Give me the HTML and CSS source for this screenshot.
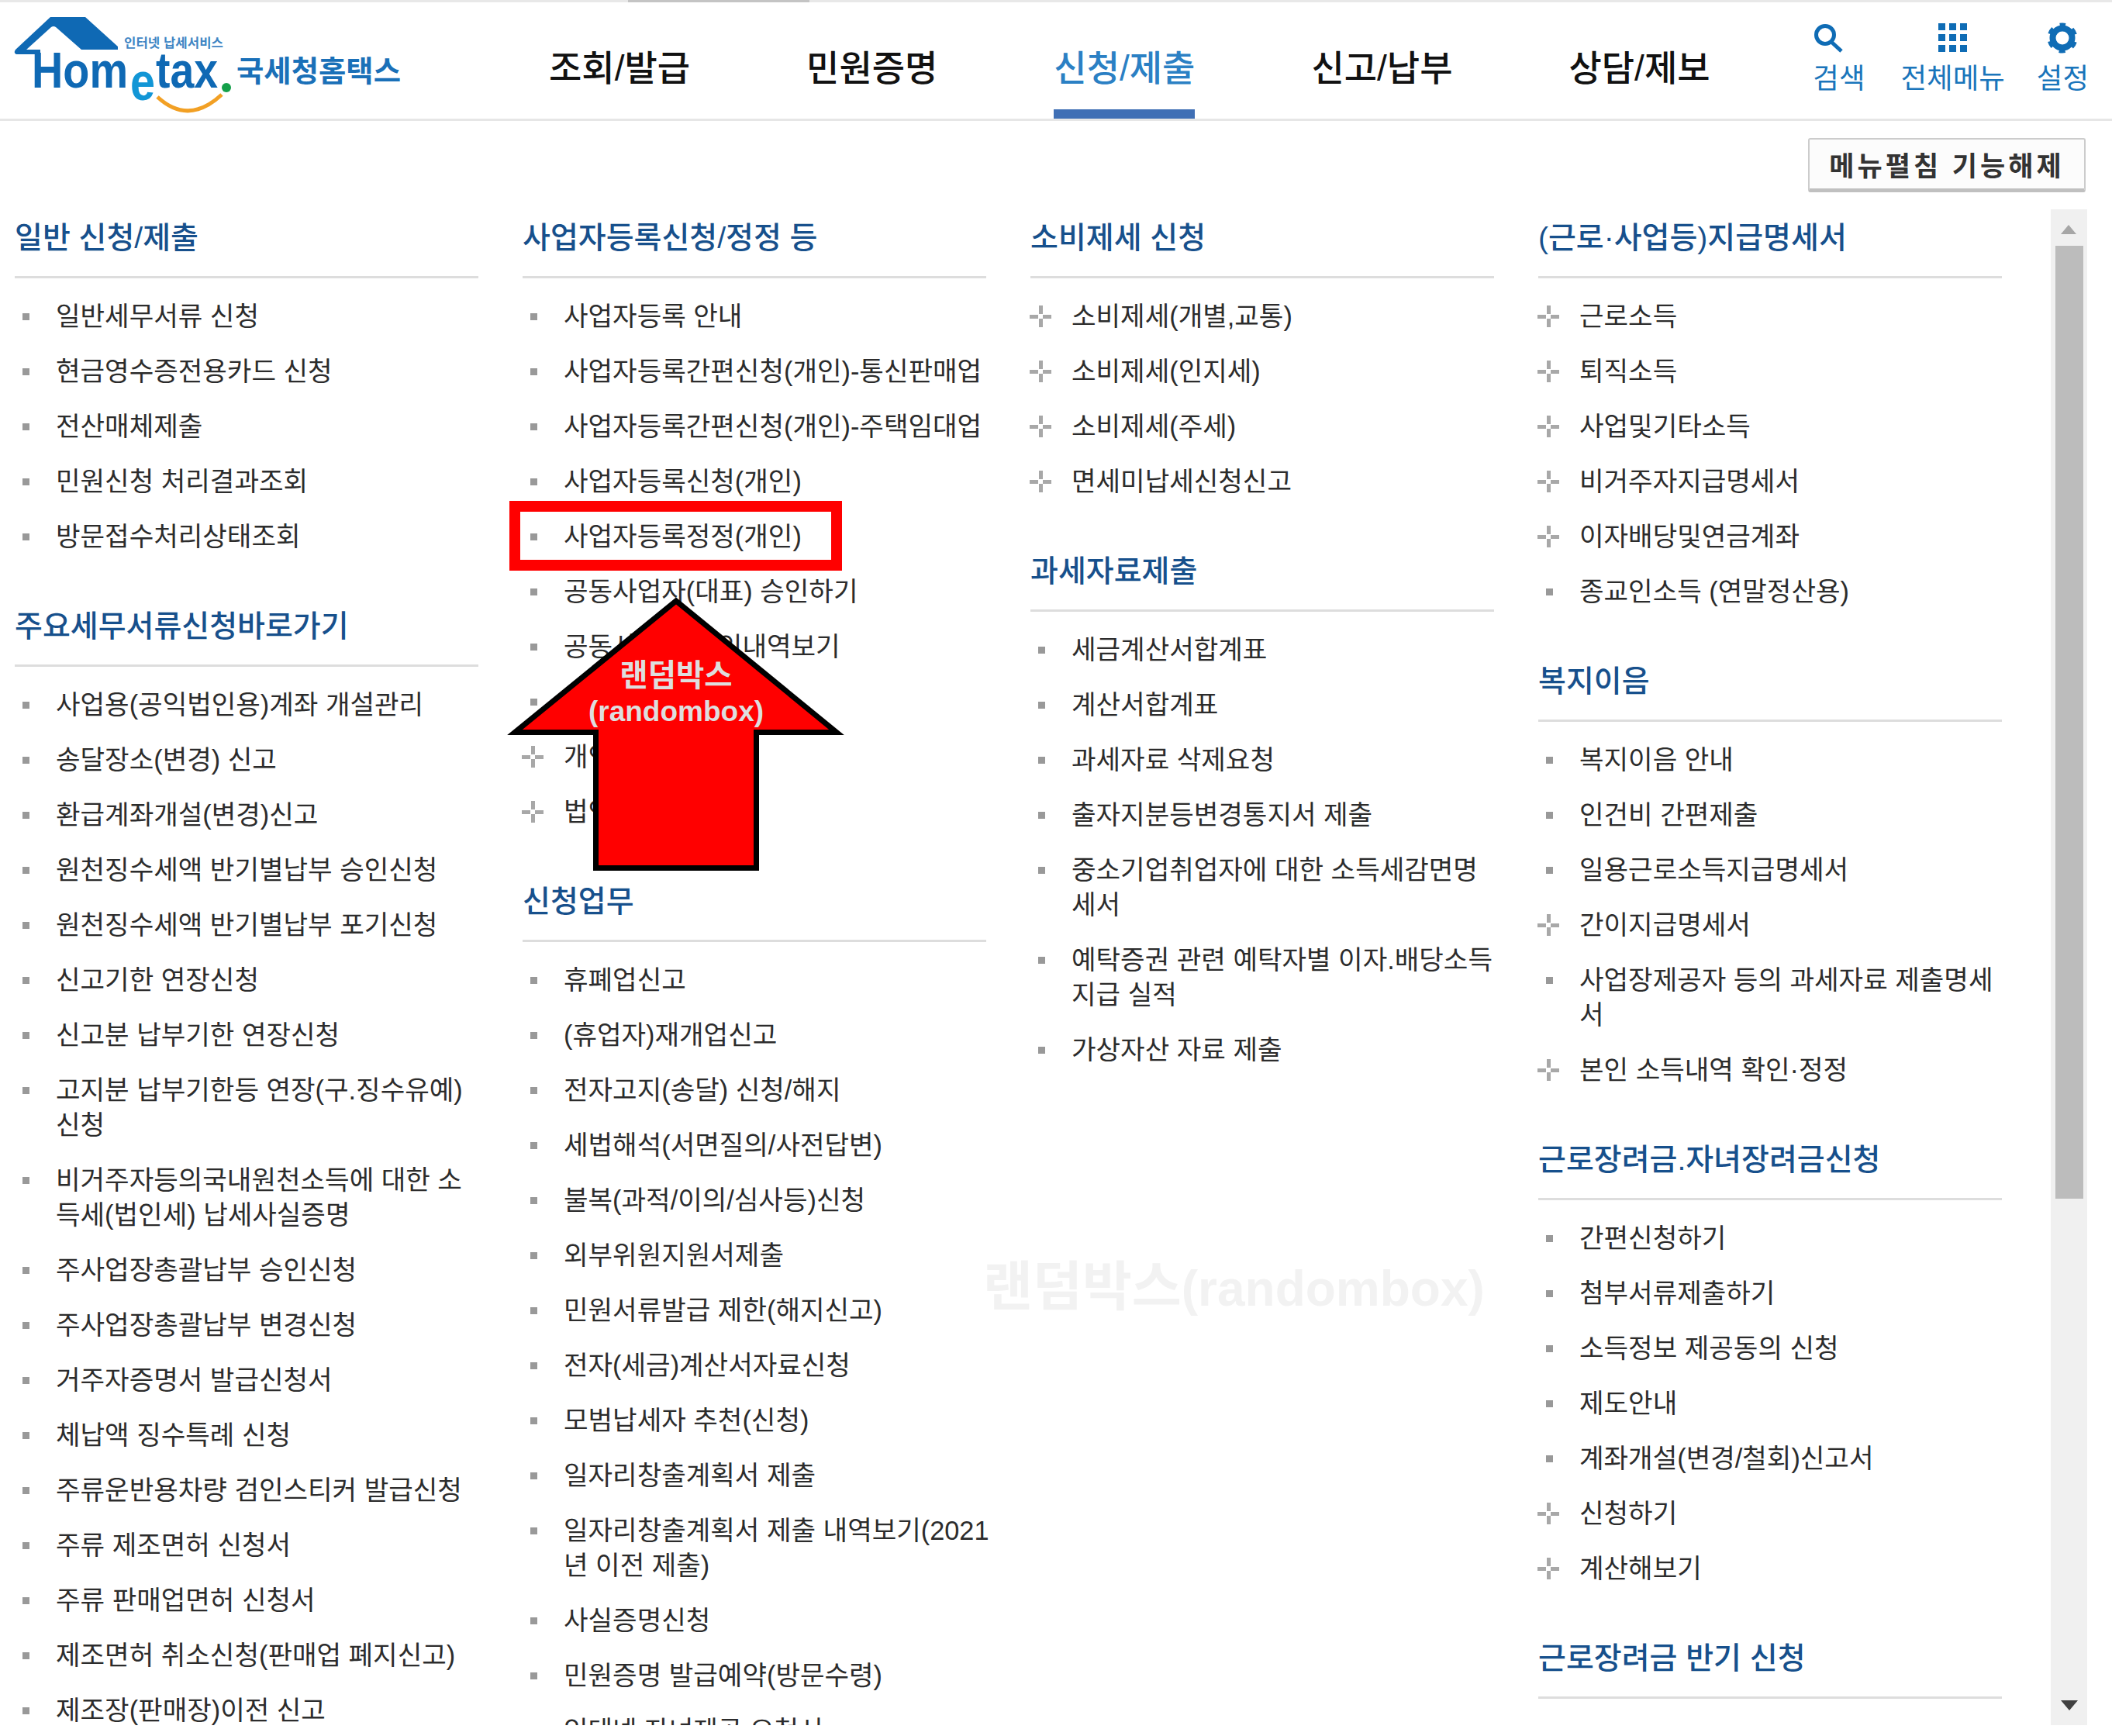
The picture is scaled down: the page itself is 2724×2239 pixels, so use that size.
FILE: index.html
```html
<!DOCTYPE html>
<html lang="ko">

<head>
    <meta charset="UTF-8">
    <title>Hometax 국세청홈택스</title>
    <link rel="stylesheet" href="styles.css">
</head>

<body>
    <div class="page">
        <div class="top-strip"><span class="strip-mark"></span></div>

        <header class="site-header">
            <svg class="logo" width="540" height="150" viewBox="0 3 540 150">
                <path class="logo-house" d="M65 22H110L152 60V64H105L72 35Q69 33 66 35L34 64H52V70H21Q17 68 20 64Z"/>
                <text class="logo-slogan" x="160" y="61" textLength="128" lengthAdjust="spacingAndGlyphs">인터넷 납세서비스</text>
                <text class="logo-word" x="41" y="113" textLength="124" lengthAdjust="spacingAndGlyphs">Hom</text>
                <text class="logo-e" x="168" y="129" textLength="32" lengthAdjust="spacingAndGlyphs">e</text>
                <text class="logo-word" x="201" y="113" textLength="80" lengthAdjust="spacingAndGlyphs">tax</text>
                <circle class="logo-dot" cx="292" cy="113" r="6"/>
                <path class="logo-smile" d="M203 125Q243 162 286 122"/>
                <text class="logo-name" x="305" y="105" textLength="212" lengthAdjust="spacingAndGlyphs">국세청홈택스</text>
            </svg>

            <nav class="main-nav">
                <a>조회/발급</a>
                <a>민원증명</a>
                <a class="active">신청/제출</a>
                <a>신고/납부</a>
                <a>상담/제보</a>
            </nav>

            <div class="tools">
                <a class="tool tool-search">
                    <svg width="66" height="40" viewBox="0 0 66 40">
                        <circle cx="15" cy="16" r="11.5" fill="none" stroke="#0f6cb5" stroke-width="5"/>
                        <path d="M23 25L36 37" stroke="#0f6cb5" stroke-width="5" fill="none"/>
                    </svg>
                    <span>검색</span>
                </a>
                <a class="tool">
                    <svg width="38" height="40" viewBox="0 0 38 40" fill="#0f6cb5">
                        <rect x="0" y="1" width="9" height="9"/><rect x="14" y="1" width="9" height="9"/><rect x="28" y="1" width="9" height="9"/>
                        <rect x="0" y="15" width="9" height="9"/><rect x="14" y="15" width="9" height="9"/><rect x="28" y="15" width="9" height="9"/>
                        <rect x="0" y="29" width="9" height="9"/><rect x="14" y="29" width="9" height="9"/><rect x="28" y="29" width="9" height="9"/>
                    </svg>
                    <span>전체메뉴</span>
                </a>
                <a class="tool">
                    <svg width="40" height="40" viewBox="0 0 40 40">
                        <circle cx="20" cy="20" r="12.500" fill="none" stroke="#0f6cb5" stroke-width="8"/>
                        <circle cx="20" cy="20" r="17" fill="none" stroke="#0f6cb5" stroke-width="5" stroke-dasharray="8 9.800" stroke-dashoffset="4" transform="rotate(-90 20 20)"/>
                    </svg>
                    <span>설정</span>
                </a>
            </div>
        </header>

        <div class="toolbar">
            <button class="fold-btn">메뉴펼침 기능해제</button>
        </div>

        <main class="menu">
            <div class="columns">
                <div class="column">
                    <section class="group">
                        <h2>일반 신청/제출</h2>
                        <ul>
                            <li>일반세무서류 신청</li>
                            <li>현금영수증전용카드 신청</li>
                            <li>전산매체제출</li>
                            <li>민원신청 처리결과조회</li>
                            <li>방문접수처리상태조회</li>
                        </ul>
                    </section>
                    <section class="group">
                        <h2>주요세무서류신청바로가기</h2>
                        <ul>
                            <li>사업용(공익법인용)계좌 개설관리</li>
                            <li>송달장소(변경) 신고</li>
                            <li>환급계좌개설(변경)신고</li>
                            <li>원천징수세액 반기별납부 승인신청</li>
                            <li>원천징수세액 반기별납부 포기신청</li>
                            <li>신고기한 연장신청</li>
                            <li>신고분 납부기한 연장신청</li>
                            <li><span>고지분 납부기한등 연장(구.징수유예)<br>신청</span></li>
                            <li><span>비거주자등의국내원천소득에 대한 소<br>득세(법인세) 납세사실증명</span></li>
                            <li>주사업장총괄납부 승인신청</li>
                            <li>주사업장총괄납부 변경신청</li>
                            <li>거주자증명서 발급신청서</li>
                            <li>체납액 징수특례 신청</li>
                            <li>주류운반용차량 검인스티커 발급신청</li>
                            <li>주류 제조면허 신청서</li>
                            <li>주류 판매업면허 신청서</li>
                            <li>제조면허 취소신청(판매업 폐지신고)</li>
                            <li>제조장(판매장)이전 신고</li>
                        </ul>
                    </section>
                </div>

                <div class="column">
                    <section class="group">
                        <h2>사업자등록신청/정정 등</h2>
                        <ul>
                            <li>사업자등록 안내</li>
                            <li>사업자등록간편신청(개인)-통신판매업</li>
                            <li>사업자등록간편신청(개인)-주택임대업</li>
                            <li>사업자등록신청(개인)</li>
                            <li>사업자등록정정(개인)</li>
                            <li>공동사업자(대표) 승인하기</li>
                            <li>공동사업자 승인내역보기</li>
                            <li>사업자등록증 재발급</li>
                            <li class="more">개인사업자</li>
                            <li class="more">법인사업자</li>
                        </ul>
                    </section>
                    <section class="group">
                        <h2>신청업무</h2>
                        <ul>
                            <li>휴폐업신고</li>
                            <li>(휴업자)재개업신고</li>
                            <li>전자고지(송달) 신청/해지</li>
                            <li>세법해석(서면질의/사전답변)</li>
                            <li>불복(과적/이의/심사등)신청</li>
                            <li>외부위원지원서제출</li>
                            <li>민원서류발급 제한(해지신고)</li>
                            <li>전자(세금)계산서자료신청</li>
                            <li>모범납세자 추천(신청)</li>
                            <li>일자리창출계획서 제출</li>
                            <li><span>일자리창출계획서 제출 내역보기(2021<br>년 이전 제출)</span></li>
                            <li>사실증명신청</li>
                            <li>민원증명 발급예약(방문수령)</li>
                            <li>인테넷 자녀제공 요청서</li>
                        </ul>
                    </section>
                </div>

                <div class="column">
                    <section class="group">
                        <h2>소비제세 신청</h2>
                        <ul>
                            <li class="more">소비제세(개별,교통)</li>
                            <li class="more">소비제세(인지세)</li>
                            <li class="more">소비제세(주세)</li>
                            <li class="more">면세미납세신청신고</li>
                        </ul>
                    </section>
                    <section class="group">
                        <h2>과세자료제출</h2>
                        <ul>
                            <li>세금계산서합계표</li>
                            <li>계산서합계표</li>
                            <li>과세자료 삭제요청</li>
                            <li>출자지분등변경통지서 제출</li>
                            <li><span>중소기업취업자에 대한 소득세감면명<br>세서</span></li>
                            <li><span>예탁증권 관련 예탁자별 이자.배당소득<br>지급 실적</span></li>
                            <li>가상자산 자료 제출</li>
                        </ul>
                    </section>
                </div>

                <div class="column">
                    <section class="group">
                        <h2>(근로·사업등)지급명세서</h2>
                        <ul>
                            <li class="more">근로소득</li>
                            <li class="more">퇴직소득</li>
                            <li class="more">사업및기타소득</li>
                            <li class="more">비거주자지급명세서</li>
                            <li class="more">이자배당및연금계좌</li>
                            <li>종교인소득 (연말정산용)</li>
                        </ul>
                    </section>
                    <section class="group">
                        <h2>복지이음</h2>
                        <ul>
                            <li>복지이음 안내</li>
                            <li>인건비 간편제출</li>
                            <li>일용근로소득지급명세서</li>
                            <li class="more">간이지급명세서</li>
                            <li><span>사업장제공자 등의 과세자료 제출명세<br>서</span></li>
                            <li class="more">본인 소득내역 확인·정정</li>
                        </ul>
                    </section>
                    <section class="group">
                        <h2>근로장려금.자녀장려금신청</h2>
                        <ul>
                            <li>간편신청하기</li>
                            <li>첨부서류제출하기</li>
                            <li>소득정보 제공동의 신청</li>
                            <li>제도안내</li>
                            <li>계좌개설(변경/철회)신고서</li>
                            <li class="more">신청하기</li>
                            <li class="more">계산해보기</li>
                        </ul>
                    </section>
                    <section class="group">
                        <h2>근로장려금 반기 신청</h2>
                    </section>
                </div>
            </div>

            <div class="scrollbar">
                <div class="scroll-up"></div>
                <div class="scroll-thumb"></div>
                <div class="scroll-down"></div>
            </div>
        </main>

        <!-- overlays -->
        <div class="watermark"><span class="mark-ko">랜덤박스</span>(randombox)</div>
        <div class="red-box"></div>
        <svg class="red-arrow" width="450" height="375" viewBox="650 755 450 375">
            <path d="M872 775L664 944.500H768.500V1119.500H975.500V944.500H1079Z" fill="#ff0000" stroke="#000" stroke-width="7"/>
            <text class="arrow-ko" x="872" y="885" text-anchor="middle">랜덤박스</text>
            <text class="arrow-en" x="872" y="930" text-anchor="middle">(randombox)</text>
        </svg>
    </div>
</body>

</html>
```

FILE: styles.css
```css
* {
    box-sizing: border-box;
}

body {
    margin: 0;
    background-color: #fff;
    color: #2c2c2c;
    font-family: 'Liberation Sans', 'Noto Sans CJK KR', sans-serif;
}

a {
    text-decoration: none;
    color: inherit;
}

.page {
    position: relative;
    width: 2724px;
    height: 2239px;
    overflow: hidden;
}

.top-strip {
    height: 3px;
    background-color: #e8e8e8;
}

.strip-mark {
    display: block;
    width: 234px;
    height: 3px;
    margin-left: 810px;
    background-color: #c4c4c4;
}

/* header */
.site-header {
    display: flex;
    height: 153px;
    border-bottom: 3px solid #e6e6e6;
}

.logo {
    flex: none;
}

.logo-house {
    fill: #0f69b4;
}

.logo-slogan {
    font-size: 16px;
    font-weight: 700;
    fill: #3f86c4;
}

.logo-word {
    font-size: 64px;
    font-weight: 700;
    fill: #0f69b4;
}

.logo-e {
    font-size: 68px;
    font-weight: 700;
    fill: #1296d6;
}

.logo-dot {
    fill: #14a04a;
}

.logo-smile {
    fill: none;
    stroke: #f2a024;
    stroke-width: 5;
}

.logo-name {
    font-size: 38px;
    font-weight: 700;
    fill: #1a70b8;
}

.main-nav {
    display: flex;
    gap: 150px;
    margin-left: 168px;
}

.main-nav a {
    height: 150px;
    padding-top: 60px;
    border-bottom: 12px solid transparent;
    font-size: 46px;
    font-weight: 500;
    line-height: 50px;
    color: #111;
}

.main-nav a.active {
    color: #2b80c4;
    border-bottom-color: #3f6fb5;
}

.tools {
    display: flex;
    gap: 41px;
    margin-left: auto;
    padding: 26px 30px 0 0;
}

.tool {
    display: flex;
    flex-direction: column;
    align-items: center;
    font-size: 36.500px;
    line-height: 44px;
    color: #1a75bb;
}

.tool svg {
    display: block;
    margin-bottom: 11px;
}

.tool-search {
    margin-right: 5px;
}

/* button row */
.toolbar {
    display: flex;
    justify-content: flex-end;
    height: 114px;
    padding: 22px 34px 0 0;
}

.fold-btn {
    width: 358px;
    height: 70px;
    padding: 0;
    border: 2px solid #ccc;
    border-bottom: 5px solid #c0c0c0;
    border-radius: 3px;
    background-color: #fcfcfc;
    color: #333;
    font-family: inherit;
    font-size: 35px;
    font-weight: 700;
    letter-spacing: 4px;
}

/* menu */
.menu {
    display: flex;
    height: 1955px;
}

.columns {
    display: flex;
    flex: none;
    gap: 57px;
    width: 2645px;
    padding: 10px 0 0 19px;
    overflow: hidden;
}

.column {
    flex: none;
    width: 598px;
}

.group {
    margin-bottom: 53px;
}

.group h2 {
    margin: 0;
    padding: 2px 0 24px;
    border-bottom: 3px solid #ddd;
    color: #17508c;
    font-size: 39px;
    font-weight: 500;
    line-height: 50px;
}

.group ul {
    margin: 0;
    padding: 14px 0 0;
    list-style: none;
}

.group li {
    display: flex;
    padding: 13px 0;
    font-size: 34.300px;
    line-height: 45px;
    white-space: nowrap;
}

.group li::before {
    content: "";
    flex: none;
    width: 9px;
    height: 9px;
    margin: 18px 34px 0 10px;
    background-color: #999;
}

.group li.more::before {
    width: 28px;
    height: 28px;
    margin: 8px 26px 0 -1px;
    background-color: transparent;
    background-image:
        linear-gradient(#a8a8a8, #a8a8a8),
        linear-gradient(#a8a8a8, #a8a8a8),
        linear-gradient(#a8a8a8, #a8a8a8),
        linear-gradient(#a8a8a8, #a8a8a8);
    background-repeat: no-repeat;
    background-size: 5px 11px, 5px 11px, 11px 5px, 11px 5px;
    background-position: center top, center bottom, left center, right center;
}

.scrollbar {
    display: flex;
    flex: none;
    flex-direction: column;
    width: 47px;
    background-color: #f0f0f0;
}

.scroll-up {
    width: 0;
    height: 0;
    margin: 20px 0 15px 13px;
    border-left: 10px solid transparent;
    border-right: 10px solid transparent;
    border-bottom: 12px solid #a6a6a6;
}

.scroll-thumb {
    width: 36px;
    height: 1229px;
    margin-left: 6px;
    background-color: #bcbcbc;
}

.scroll-down {
    width: 0;
    height: 0;
    margin: auto 0 19px 13px;
    border-left: 11px solid transparent;
    border-right: 11px solid transparent;
    border-top: 13px solid #404040;
}

/* things on top of the page */
.watermark {
    position: absolute;
    left: 1268px;
    top: 1617px;
    color: #f2f2f2;
    font-size: 64px;
    font-weight: 700;
    line-height: 86px;
    white-space: nowrap;
}

.mark-ko {
    font-size: 69.500px;
}

.red-box {
    position: absolute;
    left: 657px;
    top: 646px;
    width: 429px;
    height: 90px;
    border: 14px solid #ff0000;
}

.red-arrow {
    position: absolute;
    left: 650px;
    top: 755px;
}

.red-arrow text {
    fill: #dedede;
    font-weight: 700;
}

.arrow-ko {
    font-size: 39.500px;
}

.arrow-en {
    font-size: 37px;
}
```
